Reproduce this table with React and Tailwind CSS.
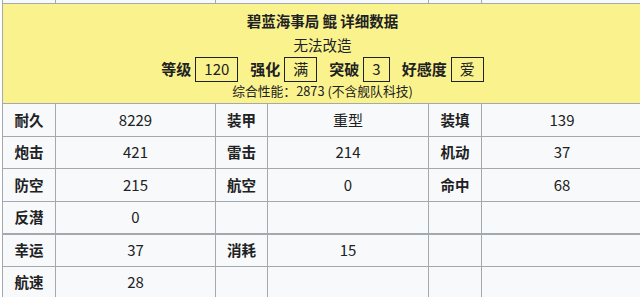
const font = '"Noto Sans CJK SC", "Noto Sans", sans-serif';

const rows = [
  [['耐久', '8229'], ['装甲', '重型'], ['装填', '139']],
  [['炮击', '421'], ['雷击', '214'], ['机动', '37']],
  [['防空', '215'], ['航空', '0'], ['命中', '68']],
  [['反潜', '0'], ['', ''], ['', '']],
  [['幸运', '37'], ['消耗', '15'], ['', '']],
  [['航速', '28'], ['', ''], ['', '']],
];

function Box({ children }) {
  return (
    <span className="inline-flex h-[25px] items-center border border-[#202122] px-[8px] font-normal">
      {children}
    </span>
  );
}

function Stat({ label, value }) {
  return (
    <span className="flex items-center gap-[4px]">
      <span className="font-bold">{label}</span>
      <Box>{value}</Box>
    </span>
  );
}

export default function App() {
  return (
    <div
      className="h-[297px] w-[640px] overflow-hidden bg-white pl-[2px] text-[#202122]"
      style={{ fontFamily: font }}
    >
      <table className="-mt-[29px] w-[640px] table-fixed border-collapse bg-[#f8f9fa]">
        <colgroup>
          <col className="w-[53px]" />
          <col className="w-[160px]" />
          <col className="w-[52px]" />
          <col className="w-[161px]" />
          <col className="w-[53px]" />
          <col className="w-[161px]" />
        </colgroup>
        <tbody>
          <tr className="h-[32px]">
            <td className="border border-[#a2a9b1]" />
            <td className="border border-[#a2a9b1]" />
            <td colSpan={2} className="border border-[#a2a9b1]" />
            <td className="border border-[#a2a9b1]" />
            <td className="border border-[#a2a9b1]" />
          </tr>
          <tr>
            <td
              colSpan={6}
              className="h-[100px] border border-[#a2a9b1] bg-[#faf38d] p-0 pt-[5px] text-center align-top"
            >
              <div className="flex flex-col items-center">
                <div className="text-[14.5px] leading-[24px] font-bold">
                  碧蓝海事局 鲲 详细数据
                </div>
                <div className="text-[14.5px] leading-[24px]">无法改造</div>
                <div className="flex h-[25px] items-center gap-[12px] text-[15px]">
                  <Stat label="等级" value="120" />
                  <Stat label="强化" value="满" />
                  <Stat label="突破" value="3" />
                  <Stat label="好感度" value="爱" />
                </div>
                <div className="text-[12.8px] leading-[17px]">
                  综合性能：2873 (不含舰队科技)
                </div>
              </div>
            </td>
          </tr>
          {rows.map((row, r) => (
            <tr
              key={r}
              className={`h-[32.5px] ${r === 4 ? 'border-t-2 border-t-[#a2a9b1]' : ''}`}
            >
              {row.map(([label, value], c) => [
                <td
                  key={`l${c}`}
                  className="border border-[#a2a9b1] p-0 text-center text-[14.5px] font-bold"
                >
                  {label}
                </td>,
                <td
                  key={`v${c}`}
                  className="border border-[#a2a9b1] p-0 text-center text-[15px]"
                >
                  {value}
                </td>,
              ])}
            </tr>
          ))}
        </tbody>
      </table>
    </div>
  );
}
